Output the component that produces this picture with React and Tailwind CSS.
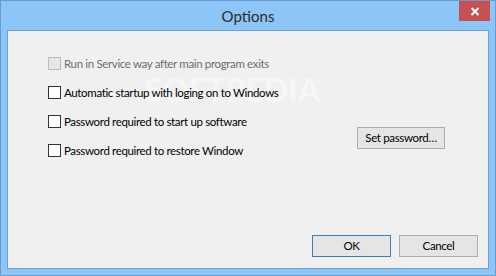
export default function App() {
  const rows = [
    { label: "Run in Service way after main program exits", disabled: true },
    { label: "Automatic startup with loging on to Windows" },
    { label: "Password required to start up software" },
    { label: "Password required to restore Window" },
  ];
  return (
    <div
      className="w-[496px] h-[276px] bg-[#8cc6f7] border border-[#6a9bd0] flex flex-col overflow-hidden"
      style={{ fontFamily: '"Segoe UI", Lato, "Liberation Sans", sans-serif' }}
    >
      <div className="h-[29px] relative flex items-center justify-center shrink-0">
        <span className="text-[15px] text-[#2b2b2b] leading-none mt-[1px]">Options</span>
        <div className="absolute right-[5px] top-0 w-[31px] h-[20px] bg-[#c75050] flex items-center justify-center">
          <svg width="10" height="9" viewBox="0 0 10 9">
            <path d="M1.5 1 L8.5 8 M8.5 1 L1.5 8" stroke="#fff" strokeWidth="2" />
          </svg>
        </div>
      </div>
      <div className="mx-[6px] h-[239px] border border-[#6fa3d6] bg-[#f0f0f0] flex flex-col relative text-[11.5px] tracking-[-0.35px]">
        <div className="absolute left-[137px] top-[43px] text-[32px] font-bold tracking-[0px] text-white opacity-40 leading-none pointer-events-none">
          SOFTPEDIA
        </div>
        <div className="flex relative">
          <div className="pl-[40px] pt-[26px] flex flex-col gap-[16px]">
            {rows.map((r, i) => (
              <div key={i} className="flex items-center h-[13px]">
                <div
                  className={
                    r.disabled
                      ? "w-[13px] h-[13px] border border-[#bcbcbc] bg-[#e6e6e6]"
                      : "w-[13px] h-[13px] border border-[#333333] bg-white"
                  }
                />
                <span
                  className={
                    "ml-[3px] leading-none whitespace-nowrap " +
                    (r.disabled ? "text-[#6d6d6d]" : "text-[#000000]")
                  }
                >
                  {r.label}
                </span>
              </div>
            ))}
          </div>
          <div className="ml-auto mr-[43px] pt-[96px]">
            <div className="w-[88px] h-[22px] border border-[#adadad] bg-[#e5e5e5] flex items-center justify-center text-[#000]">
              Set password…
            </div>
          </div>
        </div>
        <div className="mt-auto flex justify-end gap-[8px] pr-[10px] pb-[11px] relative">
          <div className="w-[79px] h-[22px] border border-[#3c7fb1] bg-[#e5e5e5] flex items-center justify-center text-[#000]">
            OK
          </div>
          <div className="w-[79px] h-[22px] border border-[#adadad] bg-[#e5e5e5] flex items-center justify-center text-[#000]">
            Cancel
          </div>
        </div>
      </div>
    </div>
  );
}
